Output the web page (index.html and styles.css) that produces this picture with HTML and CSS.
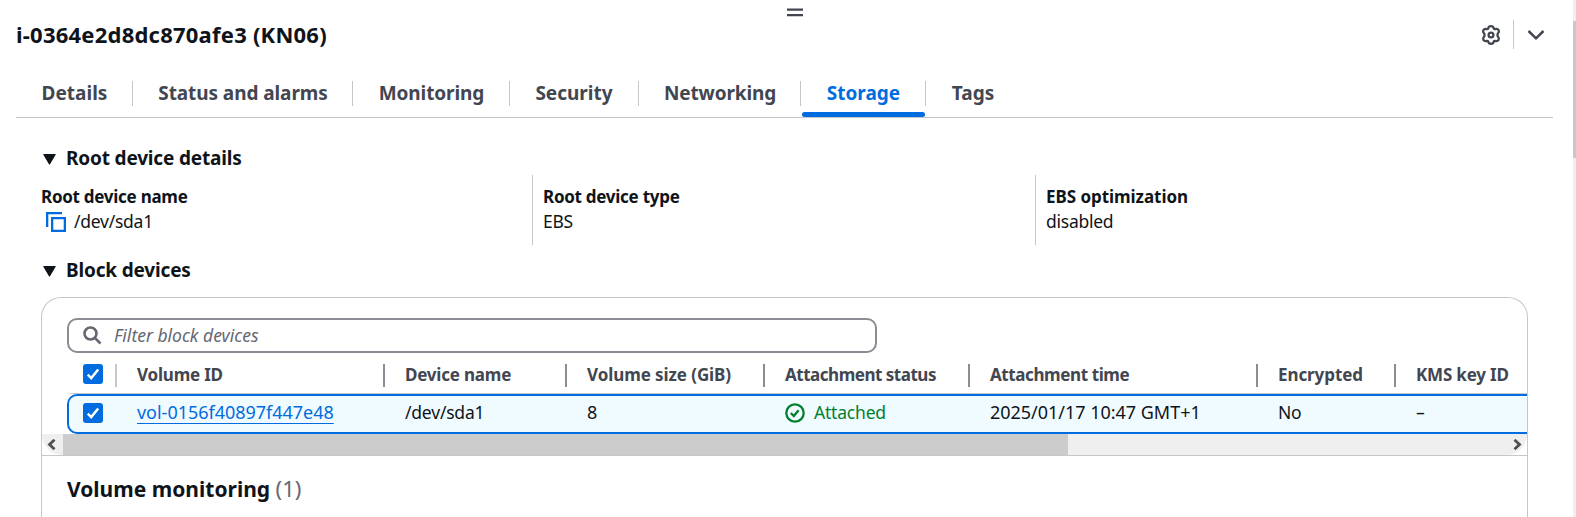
FILE: index.html
```
<!DOCTYPE html>
<html lang="en">
<head>
<meta charset="utf-8">
<title>Instance storage</title>
<link rel="stylesheet" href="styles.css">
</head>
<body>
<main class="panel">
  <div class="handle"><svg width="16" height="9" viewBox="0 0 16 9"><path d="M0 .5h16v2.200H0zM0 6h16v2.200H0z" fill="#424650"/></svg></div>
  <header class="header">
    <h1 class="title">i-0364e2d8dc870afe3 (KN06)</h1>
    <div class="actions">
      <svg class="gear" width="20" height="20" viewBox="0 0 20 20" fill="none" stroke="#424650" stroke-width="2.300" stroke-linejoin="round"><path d="M7.300 3.300C7.600 1.700 8.500 1.200 10 1.200s2.400.5 2.700 2.100c.2.700.7 1 1.400.8 1.600-.5 2.800-.2 3.500 1 .7 1.200.5 2.100-.6 3.200-.7.7-.7 2.700 0 3.400 1.100 1.100 1.300 2 .6 3.200-.7 1.200-1.900 1.500-3.500 1-.7-.2-1.200.1-1.400.8-.3 1.600-1.200 2.100-2.700 2.100s-2.400-.5-2.700-2.100c-.2-.7-.7-1-1.400-.8-1.600.5-2.800.2-3.500-1-.7-1.200-.5-2.100.6-3.200.7-.7.7-2.700 0-3.400-1.100-1.100-1.300-2-.6-3.200.7-1.200 1.900-1.500 3.500-1 .7.200 1.200-.1 1.400-.8z"/><circle cx="10" cy="10" r="2.400"/></svg>
      <svg class="chevron" width="18" height="12" viewBox="0 0 18 12" fill="none" stroke="#424650" stroke-width="2.500"><path d="M1.500 2 9 9.300 16.500 2"/></svg>
    </div>
  </header>
  <nav class="tabs">
    <a class="tab t-details">Details</a>
    <a class="tab t-status">Status and alarms</a>
    <a class="tab t-monitoring">Monitoring</a>
    <a class="tab t-security">Security</a>
    <a class="tab t-networking">Networking</a>
    <a class="tab t-storage active">Storage</a>
    <a class="tab t-tags">Tags</a>
  </nav>
  <section class="content">
    <h2 class="section"><svg width="13" height="11" viewBox="0 0 13 11"><path d="M.7.5h11.600L6.500 10.300z" fill="#0f141a" stroke="#0f141a" stroke-linejoin="round"/></svg><span>Root device details</span></h2>
    <div class="facts">
      <div class="fact"><div class="label">Root device name</div><div class="value"><svg class="copy" width="20" height="20" viewBox="0 0 20 20" fill="none" stroke="#006ce0" stroke-width="2.300"><path d="M1.150 15V1.150H16M6.150 6.150h12.700v12.700H6.150z"/></svg>/dev/sda1</div></div>
      <div class="fact"><div class="label">Root device type</div><div class="value">EBS</div></div>
      <div class="fact"><div class="label ebs">EBS optimization</div><div class="value">disabled</div></div>
    </div>
    <h2 class="section second"><svg width="13" height="11" viewBox="0 0 13 11"><path d="M.7.5h11.600L6.500 10.300z" fill="#0f141a" stroke="#0f141a" stroke-linejoin="round"/></svg><span>Block devices</span></h2>
    <div class="card">
      <div class="table-area">
        <div class="search"><svg width="19" height="19" viewBox="0 0 19 19" fill="none" stroke="#656871" stroke-width="2.600"><circle cx="7.500" cy="7.500" r="6"/><path d="m11.800 11.800 5.700 5.700"/></svg><span>Filter block devices</span></div>
        <div class="grid head">
          <div class="cell pick"><svg class="check" width="20" height="20" viewBox="0 0 20 20"><rect width="20" height="20" rx="3" fill="#006ce0"/><path d="m4.800 10.700 3.400 3.400 7-8.600" fill="none" stroke="#fff" stroke-width="2.500"/></svg></div>
          <div class="cell s2">Volume ID</div>
          <div class="cell s2">Device name</div>
          <div class="cell s1">Volume size (GiB)</div>
          <div class="cell s4">Attachment status</div>
          <div class="cell s3">Attachment time</div>
          <div class="cell s1">Encrypted</div>
          <div class="cell s2">KMS key ID</div>
        </div>
        <div class="grid row">
          <div class="cell pick"><svg class="check" width="20" height="20" viewBox="0 0 20 20"><rect width="20" height="20" rx="3" fill="#006ce0"/><path d="m4.800 10.700 3.400 3.400 7-8.600" fill="none" stroke="#fff" stroke-width="2.500"/></svg></div>
          <div class="cell wide"><a class="link">vol-0156f40897f447e48</a></div>
          <div class="cell">/dev/sda1</div>
          <div class="cell wide">8</div>
          <div class="cell ok"><svg width="20" height="20" viewBox="0 0 20 20" fill="none" stroke="#00802f" stroke-width="2.300"><circle cx="10" cy="10" r="8.700"/><path d="m5.800 10 3 3 4.800-5.700"/></svg>Attached</div>
          <div class="cell wide">2025/01/17 10:47 GMT+1</div>
          <div class="cell">No</div>
          <div class="cell">–</div>
        </div>
        <div class="scroll">
          <div class="scroll-btn"><svg width="9" height="11" viewBox="0 0 9 11"><path d="M7.500.8 2.500 5.500l5 4.700" fill="none" stroke="#505050" stroke-width="2.800"/></svg></div>
          <div class="thumb"></div>
          <div class="scroll-btn end"><svg width="9" height="11" viewBox="0 0 9 11"><path d="m1.500.8 5 4.700-5 4.700" fill="none" stroke="#505050" stroke-width="2.800"/></svg></div>
        </div>
      </div>
      <h3 class="monitoring">Volume monitoring <span>(1)</span></h3>
    </div>
  </section>
</main>
<aside class="page-scroll"><div class="page-thumb"></div></aside>
</body>
</html>
```
FILE: styles.css
```
* { box-sizing: border-box; }
body {
  margin: 0;
  height: 517px;
  display: flex;
  overflow: hidden;
  background: #fff;
  color: #0f141a;
  font: 17px/24px "Noto Sans", sans-serif;
}
h1, h2, h3 { margin: 0; }
svg { display: block; flex: none; }
.panel { flex: 1; min-width: 0; padding: 0 20px 0 16px; }
.page-scroll { width: 3px; background: #efefef; padding-top: 21px; }
.page-thumb { height: 137px; background: #c8c8c8; }
.handle { height: 20px; padding: 8px 0 0 771px; }
.header { height: 29px; display: flex; justify-content: space-between; align-items: center; }
.title { font-size: 22px; line-height: 29px; letter-spacing: 0.23px; }
.actions { display: flex; align-items: center; height: 29px; padding-right: 8px; }
.gear { margin-right: 12px; }
.chevron { box-sizing: content-box; padding: 9px 0 8px 13px; border-left: 1px solid #c6c6cd; }

.tabs { display: flex; height: 69px; padding-top: 32px; border-bottom: 1px solid #c6c6cd; }
.tab {
  position: relative;
  height: 25px;
  border-right: 1px solid #c6c6cd;
  color: #424650;
  font-size: 19px;
  line-height: 25px;
  font-weight: 700;
  text-align: center;
}
.t-details { width: 117px; padding-left: 1px; }
.t-status { width: 220px; padding-left: 1px; letter-spacing: -0.08px; }
.t-monitoring { width: 157px; padding-left: 1px; letter-spacing: -0.1px; }
.t-security { width: 129px; }
.t-networking { width: 162px; letter-spacing: -0.15px; padding-left: 1px; }
.t-storage { width: 125px; padding-left: 1px; }
.t-tags { width: 94px; border: 0; }
.active { color: #006ce0; }
.active::after {
  content: "";
  position: absolute;
  left: 1px;
  right: 0;
  bottom: -11px;
  height: 5px;
  border-radius: 3px;
  background: #006ce0;
}

.content { padding: 28px 9px 0 25px; margin-right: 3px; }
.section {
  display: flex;
  align-items: center;
  gap: 9px;
  height: 23px;
  padding-left: 2px;
  font-size: 19px;
  line-height: 23px;
  letter-spacing: -0.17px;
}
.section svg { margin: 3px 1px 0 0; }
.section span { padding-top: 2px; }
.second { margin-top: 13px; }
.facts { display: grid; grid-template-columns: 491px 503px 1fr; height: 70px; margin-top: 6px; }
.fact { padding-top: 9px; line-height: 25px; }
.fact + .fact { padding-left: 10px; border-left: 1px solid #c6c6cd; }
.label { font-weight: 700; letter-spacing: -0.27px; }
.ebs { letter-spacing: -0.05px; }
.value { display: flex; align-items: center; font-size: 17.5px; letter-spacing: -0.25px; }
.copy { margin: 1px 8px 0 5px; }

.card {
  width: 1487px;
  height: 240px;
  margin-top: 16px;
  border: 1px solid #c6c6cd;
  border-bottom: 0;
  border-radius: 20px 20px 0 0;
}
.table-area {
  height: 157px;
  padding-top: 20px;
  overflow: hidden;
  border-radius: 0 0 20px 20px;
}
.search {
  display: flex;
  align-items: center;
  gap: 12px;
  width: 810px;
  height: 35px;
  margin-left: 25px;
  padding-left: 14px;
  border: 2px solid #8c8c94;
  border-radius: 10px;
  color: #656871;
  font-size: 17.5px;
  font-style: italic;
}
.search span { margin-top: -2px; }
.grid {
  display: grid;
  grid-template-columns: 50px 268px 182px 198px 205px 288px 138px 1fr;
  margin-left: 25px;
}
.head {
  height: 41px;
  padding-top: 11px;
  border-bottom: 1px solid #c6c6cd;
  border-image: linear-gradient(90deg, #fff, #c6c6cd 6px) 1;
  color: #424650;
  font-weight: 700;
}
.head .cell { height: 23px; line-height: 22px; padding-left: 20px; border-right: 2px solid #8c8c94; }
.head .pick { padding-left: 16px; border-color: #c6c6cd; }
.head .cell:last-child { border: 0; }
.s1 { letter-spacing: -0.08px; }
.s2 { letter-spacing: -0.2px; }
.s3 { letter-spacing: -0.4px; }
.s4 { letter-spacing: -0.48px; }
.row {
  height: 40px;
  border: 2px solid #006ce0;
  border-right: 0;
  border-radius: 10px 0 0 10px;
  background: #f0fbff;
  font-size: 17.5px;
  letter-spacing: -0.2px;
  line-height: 32px;
}
.row .cell { padding-left: 18px; height: 34px; white-space: nowrap; }
.row .pick { padding: 7px 0 0 14px; }
.row .wide { font-size: 18px; letter-spacing: -0.02px; }
.link { color: #006ce0; text-decoration: underline; text-decoration-thickness: 1px; text-underline-offset: 4px; }
.row .ok { display: flex; gap: 9px; color: #00802f; }
.ok svg { margin-top: 7px; }
.scroll {
  display: flex;
  height: 21px;
  background: #efefef;
  border-radius: 0 0 20px 20px;
}
.scroll-btn { display: flex; align-items: center; width: 21px; padding-left: 5px; }
.thumb { width: 1005px; background: #ccc; }
.end { margin-left: auto; width: 14px; padding-left: 0; }
.monitoring {
  height: 82px;
  padding: 15px 0 0 25px;
  border-top: 1px solid #c6c6cd;
  font-size: 21px;
  line-height: 34px;
}
.monitoring span { font-size: 22px; font-weight: 400; color: #656871; }
```
